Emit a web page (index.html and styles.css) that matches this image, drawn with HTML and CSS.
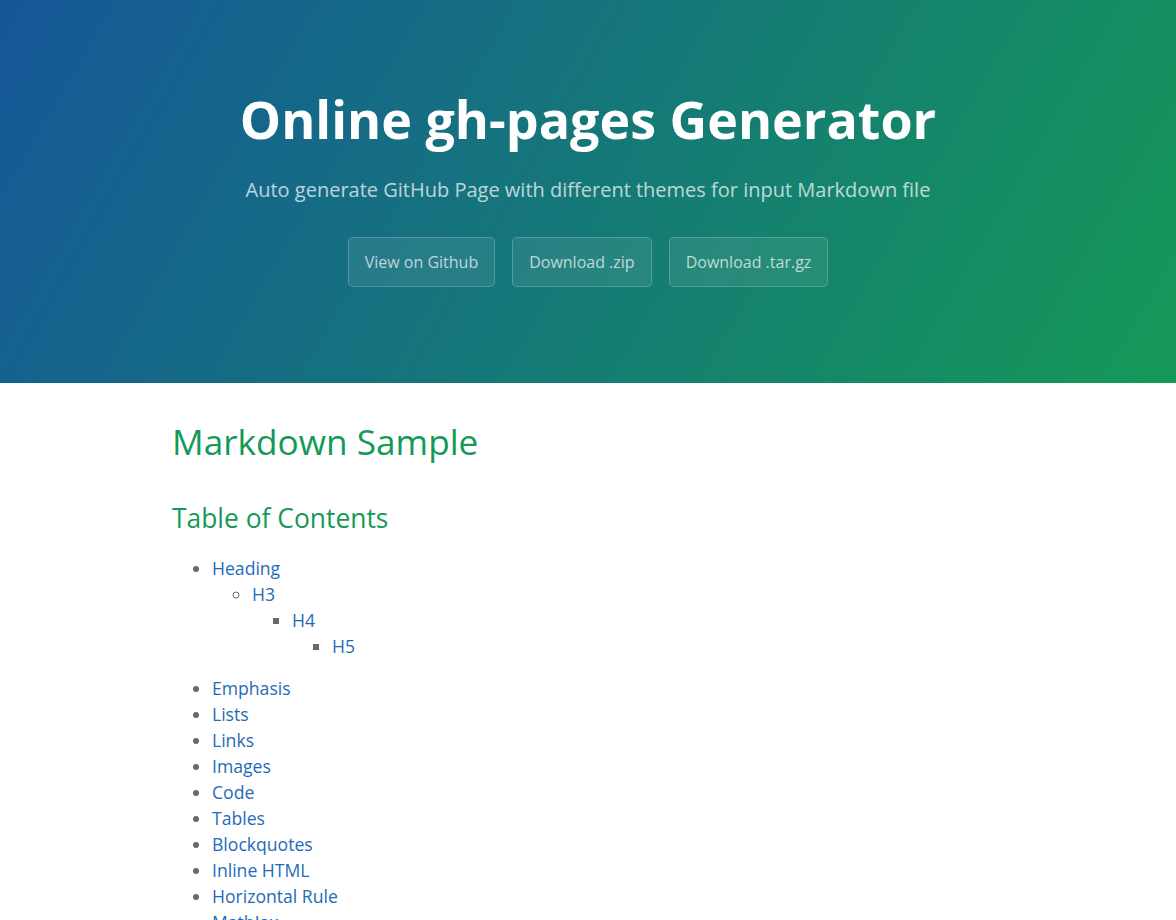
FILE: index.html
```html
<!DOCTYPE html>
<html lang="en">
<head>
<meta charset="utf-8">
<title>Online gh-pages Generator</title>
<link rel="stylesheet" href="styles.css">
</head>
<body>
<section class="page-header">
  <h1 class="project-name">Online gh-pages Generator</h1>
  <h2 class="project-tagline">Auto generate GitHub Page with different themes for input Markdown file</h2>
  <div class="btn-row">
    <a href="#" class="btn">View on Github</a>
    <a href="#" class="btn">Download .zip</a>
    <a href="#" class="btn">Download .tar.gz</a>
  </div>
</section>
<section class="main-content">
  <h1>Markdown Sample</h1>
  <h2>Table of Contents</h2>
  <ul>
    <li><a href="#">Heading</a>
      <ul>
        <li><a href="#">H3</a>
          <ul>
            <li><a href="#">H4</a>
              <ul>
                <li><a href="#">H5</a></li>
              </ul>
            </li>
          </ul>
        </li>
      </ul>
    </li>
    <li><a href="#">Emphasis</a></li>
    <li><a href="#">Lists</a></li>
    <li><a href="#">Links</a></li>
    <li><a href="#">Images</a></li>
    <li><a href="#">Code</a></li>
    <li><a href="#">Tables</a></li>
    <li><a href="#">Blockquotes</a></li>
    <li><a href="#">Inline HTML</a></li>
    <li><a href="#">Horizontal Rule</a></li>
    <li><a href="#">MathJax</a></li>
    <li><a href="#">Line Breaks</a></li>
    <li><a href="#">YouTube Videos</a></li>
  </ul>
</section>
</body>
</html>
```
FILE: styles.css
```css
* { box-sizing: border-box; }
html, body { margin: 0; padding: 0; }
body {
  font-family: "Open Sans", "Helvetica Neue", Helvetica, Arial, sans-serif;
  font-size: 16px;
  line-height: 1.5;
  color: #606c71;
}
a { color: #1e6bb8; text-decoration: none; }

.page-header {
  color: #fff;
  text-align: center;
  background-color: #159957;
  background-image: linear-gradient(120deg, #155799, #159957);
  padding: 5rem 6rem;
}
.project-name {
  font-size: 3.25rem;
  font-weight: 700;
  margin: 0 0 0.1rem;
}
.project-tagline {
  font-size: 1.25rem;
  font-weight: normal;
  opacity: 0.7;
  margin: 0.83em 0 2rem;
}
.btn-row {
  display: flex;
  justify-content: center;
  gap: 17px;
}
.btn {
  display: inline-block;
  margin-bottom: 1rem;
  color: rgba(255, 255, 255, 0.7);
  background-color: rgba(255, 255, 255, 0.08);
  border: 1px solid rgba(255, 255, 255, 0.2);
  border-radius: 0.3rem;
  padding: 0.75rem 1rem;
  font-size: 1rem;
}

.main-content {
  max-width: 64rem;
  padding: 2rem 6rem;
  margin: 0 auto;
  font-size: 1.1rem;
  word-wrap: break-word;
}
.main-content h1, .main-content h2 {
  margin-top: 2rem;
  margin-bottom: 1rem;
  font-weight: normal;
  color: #159957;
}
.main-content h1 { font-size: 2em; }
.main-content h2 { font-size: 1.5em; }
.main-content > h1:first-child { margin-top: 0; }
.main-content ul {
  margin-top: 0;
  margin-bottom: 1rem;
  padding-left: 40px;
}
.main-content li { line-height: 26px; }
```
